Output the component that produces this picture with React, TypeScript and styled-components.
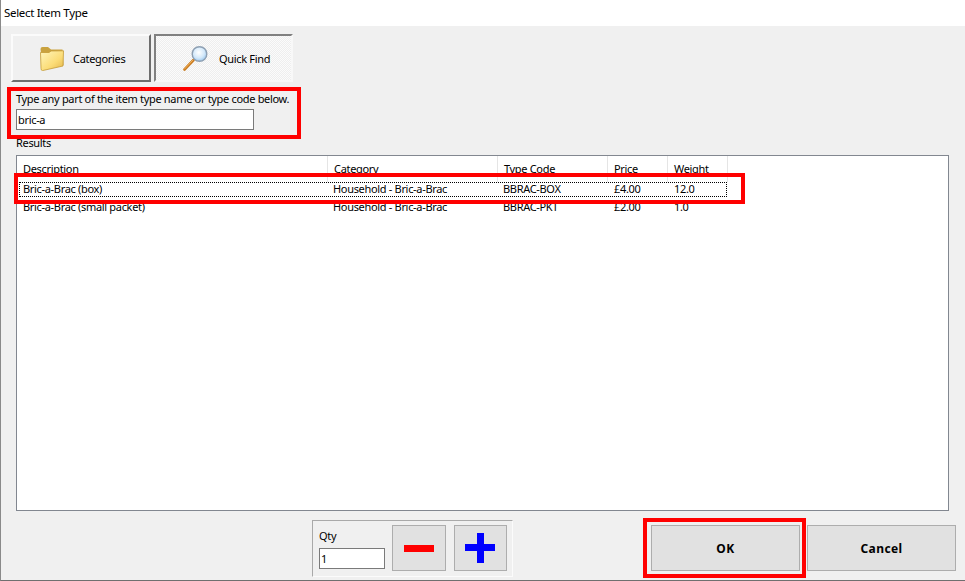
import styled, { createGlobalStyle } from "styled-components";

const GlobalStyle = createGlobalStyle`
  html, body {
    margin: 0;
    padding: 0;
    background: #f0f0f0;
  }
  body {
    font-family: "Noto Sans", "Open Sans", "Liberation Sans", sans-serif;
    font-size: 11px;
    letter-spacing: -0.32px;
    color: #000;
  }
`;

const Dialog = styled.div`
  width: 965px;
  height: 581px;
  box-sizing: border-box;
  display: flex;
  flex-direction: column;
  background: #f0f0f0;
  border-left: 1px solid #8a8a8a;
  border-bottom: 1px solid #6f6f6f;
  overflow: hidden;
`;

const TitleBar = styled.div`
  height: 26px;
  flex: none;
  background: #fff;
  padding-left: 3px;
  font-size: 11.5px;
  line-height: 26px;
`;

const Content = styled.div`
  flex: 1;
  display: flex;
  flex-direction: column;
  padding: 8px 15px 3px 10px;
`;

const Tabs = styled.div`
  display: flex;
  gap: 3px;
  height: 48px;
`;

const Tab = styled.div<{ $active?: boolean }>`
  width: ${(p) => (p.$active ? 139 : 140)}px;
  box-sizing: border-box;
  display: flex;
  align-items: center;
  gap: ${(p) => (p.$active ? 11 : 9)}px;
  padding-left: 27px;
  border: 2px solid;
  border-color: ${(p) =>
    p.$active ? "#808080 #f8f8f8 #f8f8f8 #808080" : "#fbfbfb #6d6d6d #6d6d6d #fbfbfb"};
  background: ${(p) =>
    p.$active
      ? "repeating-conic-gradient(#eeeeee 0 25%, #fbfbfb 0 50%) 0 0 / 2px 2px"
      : "#f0f0f0"};
`;

const SearchBlock = styled.div`
  position: relative;
  margin: 10px 0 0 5px;
  width: 280px;
  height: 38px;
  display: flex;
  flex-direction: column;
  line-height: 14px;
  white-space: nowrap;
`;

const Highlight = styled.div<{ $t: number; $r: number; $b: number; $l: number }>`
  position: absolute;
  top: ${(p) => p.$t}px;
  right: ${(p) => p.$r}px;
  bottom: ${(p) => p.$b}px;
  left: ${(p) => p.$l}px;
  border: 4px solid #ff0000;
  pointer-events: none;
  z-index: 2;
`;

const TextBox = styled.div<{ $width: number }>`
  width: ${(p) => p.$width}px;
  height: 21px;
  box-sizing: border-box;
  background: #fff;
  border: 1px solid #7a7a7a;
  padding-left: 1px;
  line-height: 19px;
`;

const SearchInput = styled(TextBox)`
  margin-top: 3px;
`;

const ResultsLabel = styled.div`
  margin: 6px 0 0 5px;
  height: 13px;
  line-height: 14px;
`;

const ListBox = styled.div`
  position: relative;
  margin: 6px 0 0 5px;
  width: 933px;
  height: 356px;
  box-sizing: border-box;
  background: #fff;
  border: 1px solid #828790;
`;

const HeaderRow = styled.div`
  display: grid;
  grid-template-columns: 311px 170px 110px 60px 60px;
  width: 711px;
  height: 26px;
`;

const HeaderCell = styled.div`
  border-right: 1px solid #e5e5e5;
  padding: 6px 0 0 6px;
  line-height: 14px;
`;

const RowWrap = styled.div`
  position: relative;
  width: 710px;
  height: 18px;
`;

const Row = styled.div<{ $selected?: boolean }>`
  display: grid;
  grid-template-columns: 310px 170px 111px 60px 57px;
  height: 15px;
  width: 708px;
  margin-left: 2px;
  outline: ${(p) => (p.$selected ? "1px dotted #000" : "none")};
  outline-offset: -1px;
  line-height: 13px;
`;

const Cell = styled.div`
  padding-left: 4px;
  white-space: nowrap;
`;

const Footer = styled.div`
  flex: 1;
  display: flex;
  align-items: flex-start;
  padding-top: 9px;
`;

const QtyGroup = styled.div`
  margin-left: 301px;
  width: 201px;
  height: 57px;
  box-sizing: border-box;
  display: flex;
  align-items: flex-end;
  gap: 8px;
  padding: 0 5px 5px 6px;
  border: 1px solid;
  border-color: #a9a9a9 #fbfbfb #fbfbfb #a9a9a9;
`;

const QtyField = styled.div`
  width: 66px;
  margin-right: -1px;
  display: flex;
  flex-direction: column;
  gap: 5px;
  line-height: 14px;
`;

const QtyInput = styled(TextBox)`
  margin-bottom: 2px;
`;

const StepButton = styled.div`
  width: 54px;
  height: 46px;
  box-sizing: border-box;
  background: #e1e1e1;
  border: 1px solid #adadad;
  display: flex;
  align-items: center;
  justify-content: center;
`;

const Actions = styled.div`
  margin-left: 138px;
  margin-top: 5px;
  display: flex;
  gap: 7px;
`;

const ActionSlot = styled.div`
  position: relative;
`;

const ActionButton = styled.div`
  width: 149px;
  height: 46px;
  box-sizing: border-box;
  background: #e1e1e1;
  border: 1px solid #adadad;
  display: flex;
  align-items: center;
  justify-content: center;
  font-size: 12px;
  font-weight: 700;
  letter-spacing: 0.4px;
`;

const FolderIcon = () => (
  <svg width="24" height="25" viewBox="0 0 24 25">
    <defs>
      <linearGradient id="folderFront" x1="0" y1="0" x2="1" y2="1">
        <stop offset="0" stopColor="#fff6bd" />
        <stop offset="0.6" stopColor="#fbdc77" />
        <stop offset="1" stopColor="#e3b54a" />
      </linearGradient>
    </defs>
    <path d="M0.500 3 Q0.500 1 2.500 1 L8 1 L11 3.500 L22.500 3.500 L23.500 19 L3 24 Z" fill="#c9a23f" />
    <path
      d="M0.500 6.500 L9 6.500 L11 5 L23.500 4.800 L23 20 L2.500 24.600 Q1 24.600 1 22.500 Z"
      fill="url(#folderFront)"
      stroke="#c49a35"
      strokeWidth="0.8"
    />
  </svg>
);

const MagnifierIcon = () => (
  <svg width="25" height="25" viewBox="0 0 25 25">
    <defs>
      <radialGradient id="lens" cx="0.45" cy="0.4" r="0.65">
        <stop offset="0" stopColor="#ffffff" />
        <stop offset="0.6" stopColor="#d2e8fa" />
        <stop offset="1" stopColor="#8fc0ea" />
      </radialGradient>
    </defs>
    <path d="M1.500 23.500 L10.500 14" stroke="#c97a1e" strokeWidth="2.600" strokeLinecap="round" />
    <path d="M1.500 23 L10 14" stroke="#f2b45e" strokeWidth="1" strokeLinecap="round" />
    <circle cx="16.500" cy="8" r="7.300" fill="url(#lens)" stroke="#8d9fb2" strokeWidth="1.400" />
  </svg>
);

const MinusIcon = () => (
  <svg width="30" height="7" viewBox="0 0 30 7">
    <rect width="30" height="7" fill="#ff0000" />
  </svg>
);

const PlusIcon = () => (
  <svg width="30" height="30" viewBox="0 0 30 30">
    <path d="M12 0h7v11h11v7H19V30h-7V18H0v-7h12z" fill="#0000ff" />
  </svg>
);

const results = [
  { name: "Bric-a-Brac (box)", category: "Household - Bric-a-Brac", code: "BBRAC-BOX", price: "£4.00", weight: "12.0" },
  { name: "Bric-a-Brac (small packet)", category: "Household - Bric-a-Brac", code: "BBRAC-PKT", price: "£2.00", weight: "1.0" },
];

const headers = ["Description", "Category", "Type Code", "Price", "Weight"];

export default function App() {
  return (
    <>
      <GlobalStyle />
      <Dialog>
        <TitleBar>Select Item Type</TitleBar>
        <Content>
          <Tabs>
            <Tab>
              <FolderIcon />
              <span>Categories</span>
            </Tab>
            <Tab $active>
              <MagnifierIcon />
              <span>Quick Find</span>
            </Tab>
          </Tabs>
          <SearchBlock>
            <Highlight $t={-5} $r={-5} $b={-9} $l={-9} />
            <div>Type any part of the item type name or type code below.</div>
            <SearchInput $width={238}>bric-a</SearchInput>
          </SearchBlock>
          <ResultsLabel>Results</ResultsLabel>
          <ListBox>
            <HeaderRow>
              {headers.map((h) => (
                <HeaderCell key={h}>{h}</HeaderCell>
              ))}
            </HeaderRow>
            {results.map((r, i) => (
              <RowWrap key={r.code}>
                {i === 0 && <Highlight $t={-9} $r={-18} $b={-4} $l={-3} />}
                <Row $selected={i === 0}>
                  <Cell>{r.name}</Cell>
                  <Cell>{r.category}</Cell>
                  <Cell>{r.code}</Cell>
                  <Cell>{r.price}</Cell>
                  <Cell>{r.weight}</Cell>
                </Row>
              </RowWrap>
            ))}
          </ListBox>
          <Footer>
            <QtyGroup>
              <QtyField>
                <span>Qty</span>
                <QtyInput $width={66}>1</QtyInput>
              </QtyField>
              <StepButton>
                <MinusIcon />
              </StepButton>
              <StepButton>
                <PlusIcon />
              </StepButton>
            </QtyGroup>
            <Actions>
              <ActionSlot>
                <Highlight $t={-7} $r={-6} $b={-7} $l={-8} />
                <ActionButton>OK</ActionButton>
              </ActionSlot>
              <ActionButton>Cancel</ActionButton>
            </Actions>
          </Footer>
        </Content>
      </Dialog>
    </>
  );
}
